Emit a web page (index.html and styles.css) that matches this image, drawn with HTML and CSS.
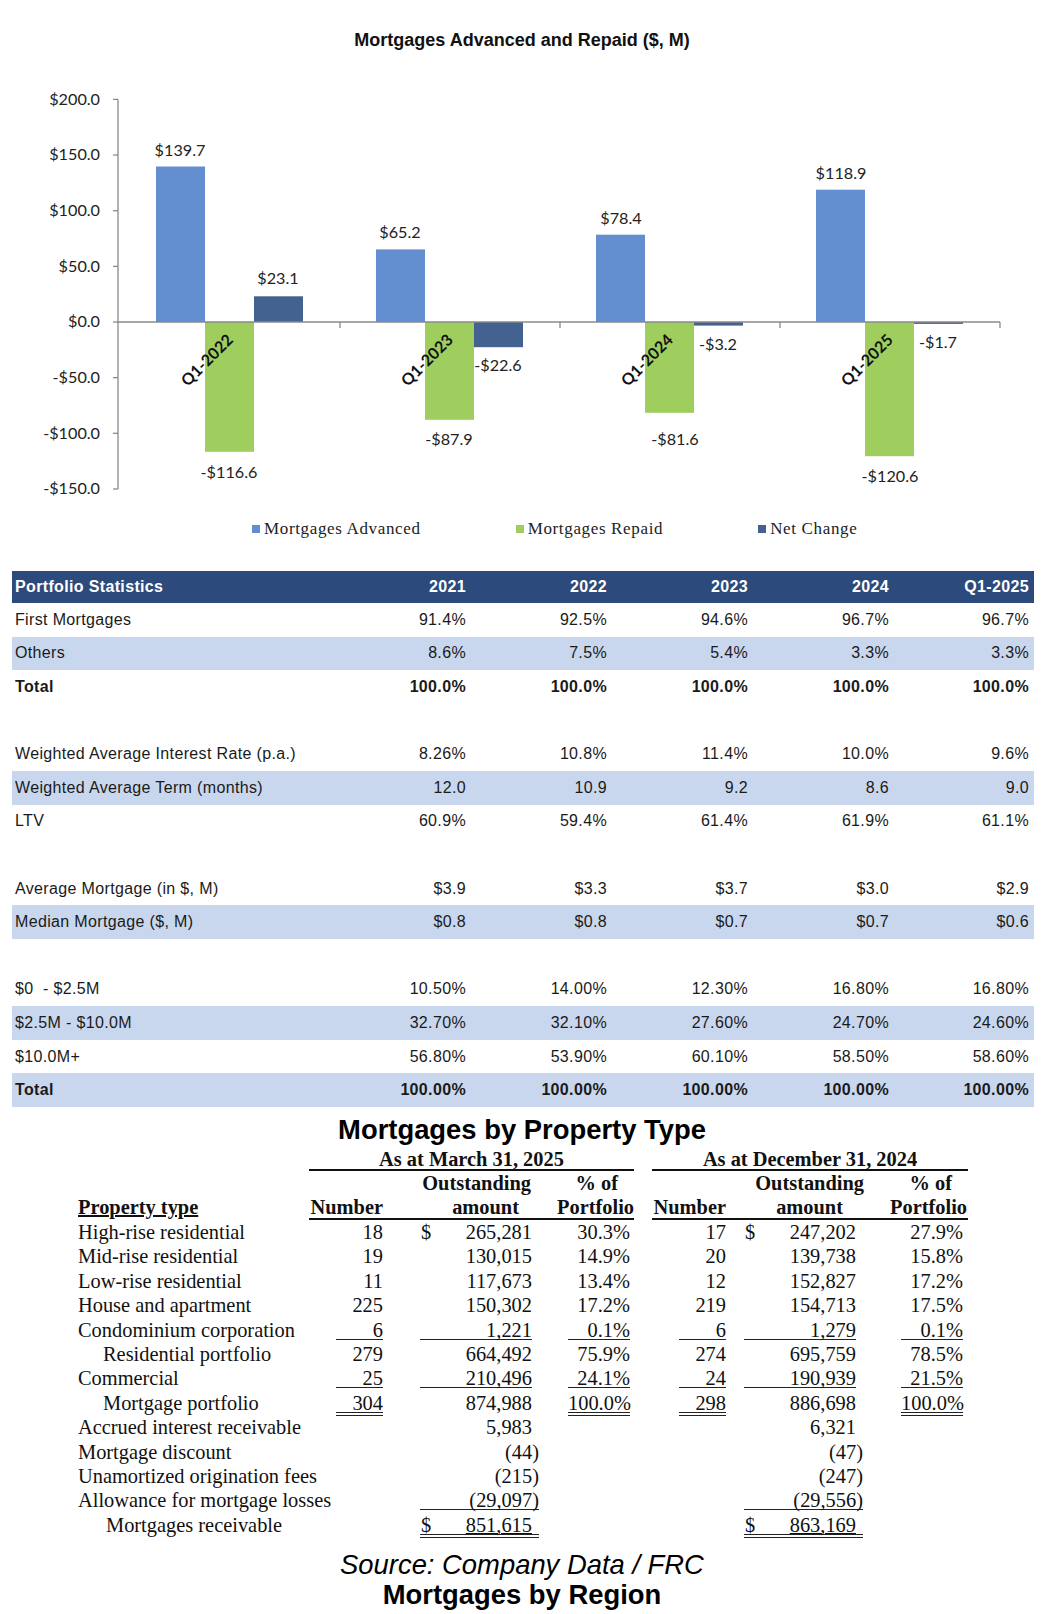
FILE: index.html
```html
<!DOCTYPE html>
<html lang="en">
<head>
<meta charset="utf-8">
<title>Mortgages</title>
<link rel="stylesheet" href="styles.css">
</head>
<body>
<section class="chart">
  <h2 class="chart-title">Mortgages Advanced and Repaid ($, M)</h2>
  <svg class="chart-svg" width="1044" height="450" viewBox="0 60 1044 450" xmlns="http://www.w3.org/2000/svg">
    <g class="axis">
      <line x1="118" y1="99.4" x2="118" y2="489"/>
      <line x1="113" y1="99.4" x2="118" y2="99.4"/>
      <line x1="113" y1="155" x2="118" y2="155"/>
      <line x1="113" y1="210.7" x2="118" y2="210.7"/>
      <line x1="113" y1="266.4" x2="118" y2="266.4"/>
      <line x1="113" y1="322" x2="118" y2="322"/>
      <line x1="113" y1="377.7" x2="118" y2="377.7"/>
      <line x1="113" y1="433.3" x2="118" y2="433.3"/>
      <line x1="113" y1="489" x2="118" y2="489"/>
    </g>
    <g class="ylabels">
      <text x="100" y="104.8">$200.0</text>
      <text x="100" y="160.4">$150.0</text>
      <text x="100" y="216.1">$100.0</text>
      <text x="100" y="271.8">$50.0</text>
      <text x="100" y="327.4">$0.0</text>
      <text x="100" y="383.1">-$50.0</text>
      <text x="100" y="438.7">-$100.0</text>
      <text x="100" y="494.4">-$150.0</text>
    </g>
    <g class="bars">
      <rect class="adv" x="156" y="166.5" width="49" height="155.5"/>
      <rect class="rep" x="205" y="322" width="49" height="129.8"/>
      <rect class="net" x="254" y="296.3" width="49" height="25.7"/>
      <rect class="adv" x="376" y="249.4" width="49" height="72.6"/>
      <rect class="rep" x="425" y="322" width="49" height="97.8"/>
      <rect class="net" x="474" y="322" width="49" height="25.2"/>
      <rect class="adv" x="596" y="234.7" width="49" height="87.3"/>
      <rect class="rep" x="645" y="322" width="49" height="90.8"/>
      <rect class="net" x="694" y="322" width="49" height="3.6"/>
      <rect class="adv" x="816" y="189.7" width="49" height="132.3"/>
      <rect class="rep" x="865" y="322" width="49" height="134.2"/>
      <rect class="net" x="914" y="322" width="49" height="1.9"/>
    </g>
    <g class="axis">
      <line x1="118" y1="322" x2="1000" y2="322"/>
      <line x1="340" y1="322" x2="340" y2="328"/>
      <line x1="560" y1="322" x2="560" y2="328"/>
      <line x1="780" y1="322" x2="780" y2="328"/>
      <line x1="1000" y1="322" x2="1000" y2="328"/>
    </g>
    <g class="dlabels">
      <text x="180" y="155.5">$139.7</text>
      <text x="229" y="477.5">-$116.6</text>
      <text x="278" y="283.5">$23.1</text>
      <text x="400" y="237.5">$65.2</text>
      <text x="449" y="444.5">-$87.9</text>
      <text x="498" y="370.5">-$22.6</text>
      <text x="621" y="223.5">$78.4</text>
      <text x="675" y="444.5">-$81.6</text>
      <text x="718" y="349.5">-$3.2</text>
      <text x="841" y="178.5">$118.9</text>
      <text x="890" y="481.5">-$120.6</text>
      <text x="938" y="347.5">-$1.7</text>
    </g>
    <g class="cats">
      <text x="234" y="341" transform="rotate(-45 234 341)">Q1-2022</text>
      <text x="454" y="341" transform="rotate(-45 454 341)">Q1-2023</text>
      <text x="674" y="341" transform="rotate(-45 674 341)">Q1-2024</text>
      <text x="894" y="341" transform="rotate(-45 894 341)">Q1-2025</text>
    </g>
  </svg>
  <ul class="legend">
    <li class="legend-item"><span class="swatch swatch-adv"></span>Mortgages Advanced</li>
    <li class="legend-item"><span class="swatch swatch-rep"></span>Mortgages Repaid</li>
    <li class="legend-item"><span class="swatch swatch-net"></span>Net Change</li>
  </ul>
</section>

<section class="stats">
  <div class="srow shead"><div class="slabel">Portfolio Statistics</div><div>2021</div><div>2022</div><div>2023</div><div>2024</div><div>Q1-2025</div></div>
  <div class="srow"><div class="slabel">First Mortgages</div><div>91.4%</div><div>92.5%</div><div>94.6%</div><div>96.7%</div><div>96.7%</div></div>
  <div class="srow band"><div class="slabel">Others</div><div>8.6%</div><div>7.5%</div><div>5.4%</div><div>3.3%</div><div>3.3%</div></div>
  <div class="srow bold"><div class="slabel">Total</div><div>100.0%</div><div>100.0%</div><div>100.0%</div><div>100.0%</div><div>100.0%</div></div>
  <div class="srow"></div>
  <div class="srow"><div class="slabel">Weighted Average Interest Rate (p.a.)</div><div>8.26%</div><div>10.8%</div><div>11.4%</div><div>10.0%</div><div>9.6%</div></div>
  <div class="srow band"><div class="slabel">Weighted Average Term (months)</div><div>12.0</div><div>10.9</div><div>9.2</div><div>8.6</div><div>9.0</div></div>
  <div class="srow"><div class="slabel">LTV</div><div>60.9%</div><div>59.4%</div><div>61.4%</div><div>61.9%</div><div>61.1%</div></div>
  <div class="srow"></div>
  <div class="srow"><div class="slabel">Average Mortgage (in $, M)</div><div>$3.9</div><div>$3.3</div><div>$3.7</div><div>$3.0</div><div>$2.9</div></div>
  <div class="srow band"><div class="slabel">Median Mortgage ($, M)</div><div>$0.8</div><div>$0.8</div><div>$0.7</div><div>$0.7</div><div>$0.6</div></div>
  <div class="srow"></div>
  <div class="srow"><div class="slabel">$0&nbsp; - $2.5M</div><div>10.50%</div><div>14.00%</div><div>12.30%</div><div>16.80%</div><div>16.80%</div></div>
  <div class="srow band"><div class="slabel">$2.5M - $10.0M</div><div>32.70%</div><div>32.10%</div><div>27.60%</div><div>24.70%</div><div>24.60%</div></div>
  <div class="srow"><div class="slabel">$10.0M+</div><div>56.80%</div><div>53.90%</div><div>60.10%</div><div>58.50%</div><div>58.60%</div></div>
  <div class="srow band bold"><div class="slabel">Total</div><div>100.00%</div><div>100.00%</div><div>100.00%</div><div>100.00%</div><div>100.00%</div></div>
</section>

<section class="ptype">
  <h2 class="ptype-title">Mortgages by Property Type</h2>
  <div class="pgrid">
    <div class="grp grp-m">As at March 31, 2025</div>
    <div class="grp grp-d">As at December 31, 2024</div>

    <div class="h c1"></div><div class="h c2"></div><div class="h c3 hm-out">Outstanding</div><div class="h c4 hm-pct">% of</div><div class="h c5"></div><div class="h c6"></div><div class="h c7 hd-out">Outstanding</div><div class="h c8 hd-pct">% of</div>

    <div class="h c1 hb"><span class="ptlabel">Property type</span></div>
    <div class="h c2 hb hl num">Number</div>
    <div class="h c3 hb hl hm-amt">amount</div>
    <div class="h c4 hb hl hm-port">Portfolio</div>
    <div class="h c5"></div>
    <div class="h c6 hb hl num">Number</div>
    <div class="h c7 hb hl hd-amt">amount</div>
    <div class="h c8 hb hl hd-port">Portfolio</div>

    <div class="lab">High-rise residential</div><div class="num">18</div><div class="amt am"><span class="box"><span class="cur">$</span>265,281</span></div><div class="pct pm">30.3%</div><div></div><div class="num">17</div><div class="amt ad"><span class="box"><span class="cur">$</span>247,202</span></div><div class="pct pd">27.9%</div>

    <div class="lab">Mid-rise residential</div><div class="num">19</div><div class="amt am"><span class="box">130,015</span></div><div class="pct pm">14.9%</div><div></div><div class="num">20</div><div class="amt ad"><span class="box">139,738</span></div><div class="pct pd">15.8%</div>

    <div class="lab">Low-rise residential</div><div class="num">11</div><div class="amt am"><span class="box">117,673</span></div><div class="pct pm">13.4%</div><div></div><div class="num">12</div><div class="amt ad"><span class="box">152,827</span></div><div class="pct pd">17.2%</div>

    <div class="lab">House and apartment</div><div class="num">225</div><div class="amt am"><span class="box">150,302</span></div><div class="pct pm">17.2%</div><div></div><div class="num">219</div><div class="amt ad"><span class="box">154,713</span></div><div class="pct pd">17.5%</div>

    <div class="lab">Condominium corporation</div><div class="num"><span class="un u1">6</span></div><div class="amt am"><span class="box u1">1,221</span></div><div class="pct pm"><span class="up u1">0.1%</span></div><div></div><div class="num"><span class="un u1">6</span></div><div class="amt ad"><span class="box u1">1,279</span></div><div class="pct pd"><span class="up u1">0.1%</span></div>

    <div class="lab ind">Residential portfolio</div><div class="num">279</div><div class="amt am"><span class="box">664,492</span></div><div class="pct pm">75.9%</div><div></div><div class="num">274</div><div class="amt ad"><span class="box">695,759</span></div><div class="pct pd">78.5%</div>

    <div class="lab">Commercial</div><div class="num"><span class="un u1">25</span></div><div class="amt am"><span class="box u1">210,496</span></div><div class="pct pm"><span class="up u1">24.1%</span></div><div></div><div class="num"><span class="un u1">24</span></div><div class="amt ad"><span class="box u1">190,939</span></div><div class="pct pd"><span class="up u1">21.5%</span></div>

    <div class="lab ind">Mortgage portfolio</div><div class="num"><span class="un u2">304</span></div><div class="amt am"><span class="box">874,988</span></div><div class="pct pm"><span class="up u2">100.0%</span></div><div></div><div class="num"><span class="un u2">298</span></div><div class="amt ad"><span class="box">886,698</span></div><div class="pct pd"><span class="up u2">100.0%</span></div>

    <div class="lab">Accrued interest receivable</div><div></div><div class="amt am"><span class="box">5,983</span></div><div></div><div></div><div></div><div class="amt ad"><span class="box">6,321</span></div><div></div>

    <div class="lab">Mortgage discount</div><div></div><div class="amt am"><span class="box"><span class="neg">(44)</span></span></div><div></div><div></div><div></div><div class="amt ad"><span class="box"><span class="neg">(47)</span></span></div><div></div>

    <div class="lab">Unamortized origination fees</div><div></div><div class="amt am"><span class="box"><span class="neg">(215)</span></span></div><div></div><div></div><div></div><div class="amt ad"><span class="box"><span class="neg">(247)</span></span></div><div></div>

    <div class="lab">Allowance for mortgage losses</div><div></div><div class="amt am"><span class="box wide u1"><span class="neg">(29,097)</span></span></div><div></div><div></div><div></div><div class="amt ad"><span class="box wide u1"><span class="neg">(29,556)</span></span></div><div></div>

    <div class="lab ind2">Mortgages receivable</div><div></div><div class="amt am"><span class="box wide u2 lnk"><span class="cur">$</span>851,615</span></div><div></div><div></div><div></div><div class="amt ad"><span class="box wide u2 lnk"><span class="cur">$</span>863,169</span></div><div></div>
  </div>
  <p class="source">Source: Company Data / FRC</p>
  <h2 class="region-title">Mortgages by Region</h2>
</section>
</body>
</html>
```

FILE: styles.css
```css
* { box-sizing: border-box; }
html, body { margin: 0; padding: 0; background: #ffffff; }
body { width: 1044px; overflow: hidden; color: #1c1c1c; font-family: "Liberation Sans", Arial, sans-serif; }

/* ---------- chart ---------- */
.chart { height: 571px; }
.chart-title {
  margin: 0;
  padding-top: 30px;
  height: 60px;
  line-height: 20px;
  font-size: 18px;
  font-weight: bold;
  text-align: center;
  color: #111;
}
.chart-svg { display: block; }
.axis line { stroke: #8a8a8a; stroke-width: 1.3; }
.ylabels text { font-family: Lato, "Open Sans", sans-serif; font-size: 16.2px; fill: #222; text-anchor: end; }
.dlabels text { font-family: Lato, "Open Sans", sans-serif; font-size: 16.2px; fill: #222; text-anchor: middle; }
.cats text { font-family: Lato, "Open Sans", sans-serif; font-size: 16px; font-weight: bold; fill: #111; text-anchor: end; }
.adv { fill: #638ECF; }
.rep { fill: #9FCD5E; }
.net { fill: #44628F; }

.legend {
  list-style: none;
  margin: 9px 0 0 252px;
  padding: 0;
  display: flex;
  gap: 95px;
  height: 20px;
  font-family: "Liberation Serif", "Times New Roman", serif;
  font-size: 17px;
  letter-spacing: 0.65px;
  line-height: 20px;
  color: #222;
}
.legend-item { display: flex; align-items: center; gap: 4px; }
.swatch { width: 8px; height: 8px; display: inline-block; }
.swatch-adv { background: #638ECF; }
.swatch-rep { background: #9FCD5E; }
.swatch-net { background: #44628F; }

/* ---------- portfolio statistics ---------- */
.stats { margin-left: 12px; width: 1022px; }
.srow {
  display: grid;
  grid-template-columns: 317px repeat(5, 141px);
  height: 33.6px;
  align-items: center;
  font-size: 16px;
  letter-spacing: 0.35px;
  color: #1a1a1a;
}
.srow > div { text-align: right; padding-right: 4px; white-space: nowrap; }
.srow > div.slabel { text-align: left; padding-left: 3px; padding-right: 0; }
.srow > div:last-child { padding-right: 5px; }
.shead { height: 32px; background: #2C4A7B; color: #ffffff; font-weight: bold; }
.band { background: #C9D7EE; }
.bold { font-weight: bold; }

/* ---------- property type ---------- */
.ptype { font-family: "Liberation Serif", "Times New Roman", serif; color: #111; }
.ptype-title {
  margin: 6px 0 0 0;
  font-family: "Liberation Sans", Arial, sans-serif;
  font-size: 27.4px;
  font-weight: bold;
  line-height: 34px;
  text-align: center;
  color: #000;
}
.pgrid {
  margin-left: 76px;
  display: grid;
  grid-template-columns: 233px 77px 155px 93px 18px 77px 136px 103px;
  grid-auto-rows: 24.4px;
  font-size: 20.4px;
  line-height: 24.4px;
  white-space: nowrap;
}
.grp {
  font-weight: bold;
  text-align: center;
  border-bottom: 2px solid #111;
  line-height: 20px;
  align-self: end;
}
.grp-m { grid-column: 2 / 5; }
.grp-d { grid-column: 6 / 9; }
.h { font-weight: bold; }
.hb { line-height: 22px; }
.hl { border-bottom: 2px solid #111; }
.ptlabel { text-decoration: underline; text-decoration-thickness: 1.5px; padding-left: 2px; }
.h.num { text-align: right; padding-right: 3px; }
.hm-out { text-align: right; padding-right: 10px; }
.hm-pct { text-align: right; padding-right: 16px; }
.hd-out { text-align: right; padding-right: 1px; }
.hd-pct { text-align: right; padding-right: 16px; }
.hm-amt { text-align: right; padding-right: 22px; }
.hd-amt { text-align: right; padding-right: 22px; }
.hm-port { text-align: right; padding-right: 0; overflow: visible; }
.hd-port { text-align: right; padding-right: 1px; }

.lab { padding-left: 2px; }
.lab.ind { padding-left: 27px; }
.lab.ind2 { padding-left: 30px; }
.num { text-align: right; padding-right: 3px; }
.pct.pm { text-align: right; padding-right: 4px; }
.pct.pd { text-align: right; padding-right: 5px; }
.amt.am { padding-left: 34px; }
.amt.ad { padding-left: 15px; }
.box {
  display: inline-block;
  width: 112px;
  text-align: right;
  line-height: 17px;
  vertical-align: baseline;
}
.cur { float: left; padding-left: 1px; }
.box.wide { width: 119px; padding-right: 7px; box-sizing: border-box; }
.box.lnk { text-decoration: underline; text-decoration-thickness: 1px; }
.neg { margin-right: -7px; }
.un { display: inline-block; width: 47px; text-align: right; line-height: 17px; }
.up { display: inline-block; width: 62px; text-align: right; line-height: 17px; }
.u1 { border-bottom: 1px solid #222; }
.u2 { border-bottom: 4px double #222; }

.source {
  margin: 12px 0 0 0;
  font-family: "Liberation Sans", Arial, sans-serif;
  font-style: italic;
  font-size: 27.4px;
  line-height: 32px;
  text-align: center;
  color: #000;
}
.region-title {
  margin: -2px 0 0 0;
  font-family: "Liberation Sans", Arial, sans-serif;
  font-size: 27.4px;
  font-weight: bold;
  line-height: 32px;
  text-align: center;
  color: #000;
}
```
